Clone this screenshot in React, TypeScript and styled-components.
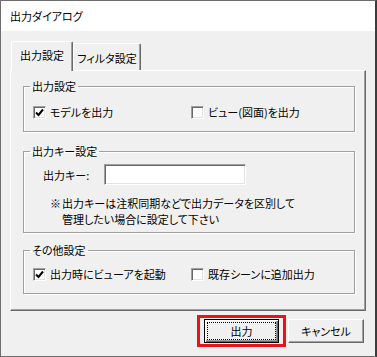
import React from "react";
import styled, { createGlobalStyle } from "styled-components";

const Global = createGlobalStyle`
  html, body { margin: 0; padding: 0; background: #2b2b2b; }
  body {
    font-family: "Noto Sans CJK JP", "Noto Sans", sans-serif;
    font-size: 11px;
    color: #000;
  }
  #root { width: 377px; height: 357px; }
  * { box-sizing: border-box; }
`;

const Window = styled.div`
  width: 377px;
  height: 357px;
  border: 1px solid #6d6d6d;
  border-right: 2px solid #3c3c3c;
  background: #f0f0f0;
  display: flex;
  flex-direction: column;
  font-feature-settings: "palt";
`;

const TitleBar = styled.div`
  height: 30px;
  flex: none;
  background: #fff;
  display: flex;
  align-items: center;
  padding-left: 9px;
  line-height: 14px;
`;

const Body = styled.div`
  flex: 1;
  padding: 10px 9px 0;
  display: flex;
  flex-direction: column;
`;

const TabRow = styled.div`
  display: flex;
  align-items: flex-end;
  height: 29px;
  margin-left: 1px;
  position: relative;
  z-index: 1;
`;

const Tab = styled.div<{ $active?: boolean }>`
  background: #f0f0f0;
  border-top: 1px solid #fff;
  border-left: 1px solid #fff;
  border-right: 1px solid #696969;
  box-shadow: inset -1px 0 0 #a0a0a0;
  border-radius: 2px 2px 0 0;
  text-align: center;
  line-height: 14px;
  white-space: nowrap;
  width: ${(p) => (p.$active ? "62px" : "68px")};
  height: ${(p) => (p.$active ? "30px" : "27px")};
  margin-bottom: ${(p) => (p.$active ? "-1px" : "0")};
  padding-top: ${(p) => (p.$active ? "6px" : "7px")};
`;

const Panel = styled.div`
  width: 356px;
  height: 241px;
  border-top: 1px solid #fff;
  border-left: 1px solid #fff;
  border-right: 1px solid #696969;
  border-bottom: 1px solid #696969;
  box-shadow: inset -1px -1px 0 #a0a0a0;
  padding: 8px 10px 0 12px;
  display: flex;
  flex-direction: column;
`;

const Group = styled.fieldset<{ $gap?: number }>`
  margin: ${(p) => p.$gap ?? 0}px 0 0 0;
  padding: 0;
  min-inline-size: 0;
  border: 1px solid #a0a0a0;
  box-shadow: 1px 1px 0 #fff, inset 1px 1px 0 #fff;
`;

const Legend = styled.legend`
  margin-left: 6px;
  padding: 0 2px;
  line-height: 14px;
`;

const CheckGrid = styled.div<{ $pt: number }>`
  display: grid;
  grid-template-columns: 158px 1fr;
  padding: ${(p) => p.$pt}px 0 12px 9px;
`;

const CheckRow = styled.label`
  display: flex;
  align-items: center;
  gap: 4px;
  height: 14px;
  line-height: 14px;
  white-space: nowrap;
`;

const Box = styled.span`
  width: 13px;
  height: 13px;
  flex: none;
  background: #fff;
  border-top: 1px solid #a0a0a0;
  border-left: 1px solid #a0a0a0;
  border-right: 1px solid #fff;
  border-bottom: 1px solid #fff;
  box-shadow: inset 1px 1px 0 #696969, inset -1px -1px 0 #e3e3e3;
  display: flex;
  align-items: center;
  justify-content: center;
`;

const KeyRow = styled.div`
  display: flex;
  align-items: center;
  padding: 6px 0 0 19px;
`;

const KeyLabel = styled.span`
  width: 61px;
  line-height: 14px;
`;

const KeyInput = styled.input`
  width: 142px;
  height: 21px;
  margin: 0;
  padding: 0 3px;
  background: #fff;
  border-top: 1px solid #a0a0a0;
  border-left: 1px solid #a0a0a0;
  border-right: 1px solid #fff;
  border-bottom: 1px solid #fff;
  box-shadow: inset 1px 1px 0 #696969, inset -1px -1px 0 #e3e3e3;
  font: inherit;
  outline: none;
`;

const Note = styled.div`
  display: flex;
  padding: 10px 0 5px 26px;
  line-height: 16px;
`;

const Mark = styled.span`
  width: 12px;
  flex: none;
`;

const ButtonRow = styled.div`
  display: flex;
  justify-content: flex-end;
  align-items: center;
  gap: 2px;
  margin-top: 4px;
  padding-right: 2px;
`;

const Highlight = styled.div`
  border: 3px solid #e81416;
  padding: 1px 4px;
  display: flex;
`;

const Button = styled.button<{ $default?: boolean; $w: number }>`
  width: ${(p) => p.$w}px;
  height: 24px;
  margin: 0;
  padding: 0;
  background: #f0f0f0;
  font: inherit;
  font-feature-settings: "palt";
  color: #000;
  line-height: 14px;
  border: 1px solid ${(p) => (p.$default ? "#000" : "#fff")};
  border-right-color: ${(p) => (p.$default ? "#000" : "#696969")};
  border-bottom-color: ${(p) => (p.$default ? "#000" : "#696969")};
  box-shadow: ${(p) =>
    p.$default
      ? "inset 1px 1px 0 #fff, inset -1px -1px 0 #696969, inset -2px -2px 0 #a0a0a0"
      : "inset -1px -1px 0 #a0a0a0"};
  outline: ${(p) => (p.$default ? "1px dotted #000" : "none")};
  outline-offset: -4px;
`;

const Check = () => (
  <svg width="9" height="9" viewBox="0 0 9 9">
    <path d="M1 4.5 L3.5 7 L8 1.5" fill="none" stroke="#000" strokeWidth="2" />
  </svg>
);

const CheckItem = ({ checked, children }: { checked?: boolean; children: React.ReactNode }) => (
  <CheckRow>
    <Box>{checked && <Check />}</Box>
    <span>{children}</span>
  </CheckRow>
);

export default function App() {
  return (
    <>
      <Global />
      <Window>
        <TitleBar>出力ダイアログ</TitleBar>
        <Body>
          <TabRow>
            <Tab $active>出力設定</Tab>
            <Tab>フィルタ設定</Tab>
          </TabRow>
          <Panel>
            <Group>
              <Legend>出力設定</Legend>
              <CheckGrid $pt={12}>
                <CheckItem checked>モデルを出力</CheckItem>
                <CheckItem>ビュー(図面)を出力</CheckItem>
              </CheckGrid>
            </Group>
            <Group $gap={12}>
              <Legend>出力キー設定</Legend>
              <KeyRow>
                <KeyLabel>出力キー:</KeyLabel>
                <KeyInput type="text" />
              </KeyRow>
              <Note>
                <Mark>※</Mark>
                <span>
                  出力キーは注釈同期などで出力データを区別して
                  <br />
                  管理したい場合に設定して下さい
                </span>
              </Note>
            </Group>
            <Group $gap={10}>
              <Legend>その他設定</Legend>
              <CheckGrid $pt={10}>
                <CheckItem checked>出力時にビューアを起動</CheckItem>
                <CheckItem>既存シーンに追加出力</CheckItem>
              </CheckGrid>
            </Group>
          </Panel>
          <ButtonRow>
            <Highlight>
              <Button $default $w={75}>出力</Button>
            </Highlight>
            <Button $w={76}>キャンセル</Button>
          </ButtonRow>
        </Body>
      </Window>
    </>
  );
}
